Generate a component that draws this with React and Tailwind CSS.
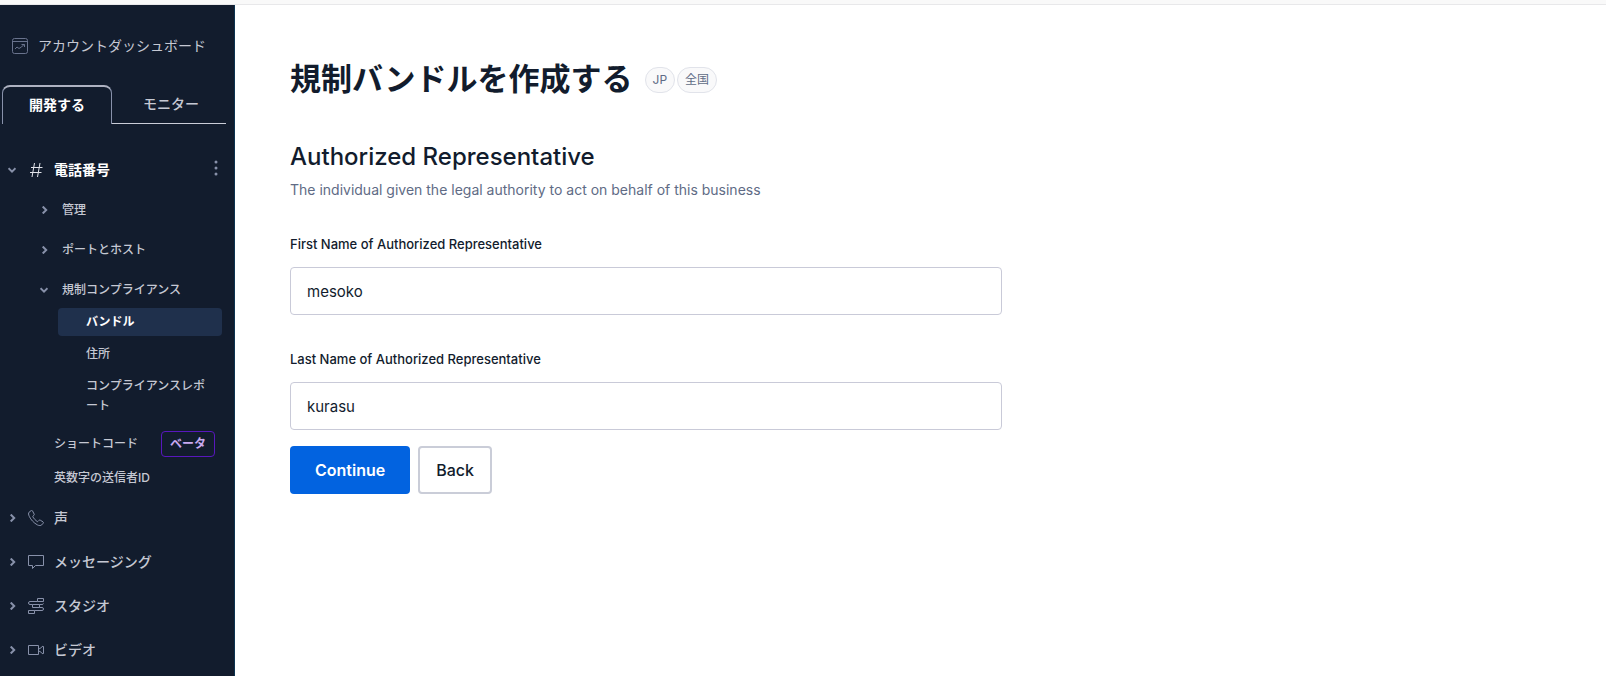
import { useState } from 'react';

const Chevron = ({ open }) => (
  <svg width="8" height="8" viewBox="0 0 8 8" fill="none" stroke="#8891aa" strokeWidth="2" className="shrink-0">
    <path d={open ? 'M0.5 2.2 4 5.7 7.5 2.2' : 'M2.7 0.5 6.2 4 2.7 7.5'} />
  </svg>
);

const Icon = ({ children, className = 'text-[#8891aa]' }) => (
  <svg
    width="16"
    height="16"
    viewBox="0 0 16 16"
    fill="none"
    stroke="currentColor"
    className={`shrink-0 ${className}`}
  >
    {children}
  </svg>
);

const products = [
  {
    label: '声',
    icon: (
      <path d="M3.2.6 1.1 2.2C.2 3 .5 4.8 1.3 6.4c1.6 3.4 4.6 6.6 8.100 8.500 1.800.900 3.400.900 4.300 0l1.500-1.700c.400-.500.300-1-.200-1.300l-2.700-1.700c-.500-.300-1-.200-1.400.200l-.900 1c-.300.300-.600.300-1 0C7.500 10.400 6 8.700 4.900 7c-.200-.400-.200-.700.100-.900l.900-.800c.400-.400.500-.800.200-1.300L4.500.900C4.200.400 3.700.200 3.200.600Z" />
    ),
  },
  {
    label: 'メッセージング',
    icon: <path d="M.5 1.5h15v10h-8l-3 3v-3h-4z" />,
  },
  {
    label: 'スタジオ',
    icon: (
      <>
        <path d="M9.5.5h6v3h-6zM4.5 6.500h7v3h-7zM.5 12.500h6v3h-6z" />
        <path d="M9.500 3.500H2a1.500 1.500 0 0 0 0 3h2.500M11.500 6.500H14a1.500 1.500 0 0 0 1.500-1M11.500 9.500H14a1.500 1.500 0 0 1 0 3H6.500" />
      </>
    ),
  },
  {
    label: 'ビデオ',
    icon: <path d="M.5 3.500h10v9H.500zM10.500 7l1.500-.500 3-2.500.500.500v7l-.500.500-3-2.500-1.500-.500" />,
  },
];

function SubGroup({ label, open }) {
  return (
    <button className="flex h-8 items-center gap-3.5 pl-10 text-left text-xs font-medium">
      <Chevron open={open} />
      {label}
    </button>
  );
}

function Sidebar() {
  return (
    <aside className="flex w-[235px] shrink-0 flex-col border-r border-[#0c3350] bg-[#121c2d] text-[#c5c8d3]">
      <a href="#dashboard" className="mt-[29px] flex h-6 items-center gap-2.5 pl-3 text-sm">
        <Icon className="text-[#69738d]">
          <rect x=".5" y=".5" width="15" height="15" rx="2" />
          <path d="M.5 3.500h15M3 11l2-2 2 1.500 2.500-1.500L12 6.500M9.500 6.500H12.500V9" />
        </Icon>
        アカウントダッシュボード
      </a>

      <div role="tablist" className="mt-[27px] mr-2 ml-0.5 flex text-sm">
        <button
          role="tab"
          aria-selected="true"
          className="h-[39px] w-[110px] rounded-t-lg border-x border-t-2 border-x-[#8891aa] border-t-[#aeb2c1] pb-0.5 font-bold text-white"
        >
          開発する
        </button>
        <button role="tab" aria-selected="false" className="h-[39px] flex-1 border-b border-[#cacdd8] pl-1 font-medium">
          モニター
        </button>
      </div>

      <nav className="mt-6 flex flex-col">
        <div className="flex h-11 items-center justify-between pr-[13px] text-white">
          <button className="flex items-center gap-2.5 pl-2 text-sm font-bold">
            <Chevron open />
            <span className="flex items-center gap-2.5 pl-0.5">
              <Icon className="text-[#e1e3ea]">
                <path d="M6.500 1 4 15M12 1 9.500 15M3 5.500h11.500M2 10.500h11.500" />
              </Icon>
              電話番号
            </span>
          </button>
          <button aria-label="メニュー" className="pb-1">
            <svg width="10" height="16" viewBox="0 0 10 16" fill="#8891aa">
              <circle cx="5" cy="2" r="1.500" />
              <circle cx="5" cy="8" r="1.500" />
              <circle cx="5" cy="14" r="1.500" />
            </svg>
          </button>
        </div>

        <div className="mt-0.5 flex flex-col gap-2">
          <SubGroup label="管理" />
          <SubGroup label="ポートとホスト" />
          <SubGroup label="規制コンプライアンス" open />
        </div>
        <div className="mt-0.5 mr-3 ml-[58px] flex flex-col gap-1 text-xs leading-5 font-medium">
          <a href="#bundles" className="rounded bg-[#1f304c] py-1 pr-4 pl-7 font-bold text-white">
            バンドル
          </a>
          <a href="#addresses" className="py-1 pr-4 pl-7">
            住所
          </a>
          <a href="#report" className="py-1 pr-4 pl-7 break-all">
            コンプライアンスレポート
          </a>
        </div>
        <div className="mt-2 flex flex-col gap-0.5 pr-[19px] pl-[54px] text-xs font-medium">
          <a href="#shortcodes" className="flex h-8 items-center justify-between">
            ショートコード
            <span className="rounded border border-[#5817bd] px-2 py-1 leading-4 font-bold text-[#c9a9f0]">ベータ</span>
          </a>
          <a href="#sender" className="flex h-8 items-center">
            英数字の送信者ID
          </a>
        </div>

        <div className="mt-0.5 flex flex-col">
          {products.map(({ label, icon }) => (
            <button key={label} className="flex h-11 items-center gap-3 pl-2 text-left text-sm font-medium">
              <Chevron />
              <span className="flex items-center gap-2.5">
                <Icon>{icon}</Icon>
                {label}
              </span>
            </button>
          ))}
        </div>
      </nav>
    </aside>
  );
}

function Field({ id, label, value, onChange }) {
  return (
    <div className="flex flex-col">
      <label htmlFor={id} className="text-[13px] leading-5 font-medium">
        {label}
      </label>
      <input
        id={id}
        type="text"
        value={value}
        onChange={(e) => onChange(e.target.value)}
        className="mt-[13px] h-12 rounded border border-[#c9cad8] bg-white px-4 text-[15px]"
      />
    </div>
  );
}

const Tag = ({ children }) => (
  <span className="rounded-full border border-[#e1e3ea] bg-[#f9f9fa] px-[7px] py-1 text-xs leading-4 text-[#606b85]">
    {children}
  </span>
);

export default function App() {
  const [firstName, setFirstName] = useState('mesoko');
  const [lastName, setLastName] = useState('kurasu');

  return (
    <div className="flex h-screen flex-col overflow-hidden bg-white font-['Inter','Noto_Sans_CJK_JP',sans-serif] text-[#121c2d]">
      <div className="h-[5px] shrink-0 border-b border-[#e8e8ea] bg-[#f9f9f9]" />
      <div className="flex min-h-0 flex-1">
        <Sidebar />
        <main className="min-w-0 flex-1 px-[55px] pt-[51px]">
          <div className="flex items-center gap-3">
            <h1 className="pb-0.5 text-[31px] leading-[46px] font-bold">規制バンドルを作成する</h1>
            <div className="flex gap-0.5">
              <Tag>JP</Tag>
              <Tag>全国</Tag>
            </div>
          </div>

          <h2 className="mt-[37px] text-2xl leading-8 font-medium">Authorized Representative</h2>
          <p className="mt-[7px] text-sm leading-5 text-[#606b85]">
            The individual given the legal authority to act on behalf of this business
          </p>

          <form className="mt-[34px] max-w-[712px]" onSubmit={(e) => e.preventDefault()}>
            <div className="flex flex-col gap-[34px]">
              <Field
                id="first-name"
                label="First Name of Authorized Representative"
                value={firstName}
                onChange={setFirstName}
              />
              <Field
                id="last-name"
                label="Last Name of Authorized Representative"
                value={lastName}
                onChange={setLastName}
              />
            </div>
            <div className="mt-4 flex gap-2">
              <button type="submit" className="h-12 rounded bg-[#0263e0] px-[25px] font-semibold text-white">
                Continue
              </button>
              <button type="button" className="h-12 rounded border-2 border-[#cacdd8] px-4 font-medium">
                Back
              </button>
            </div>
          </form>
        </main>
      </div>
    </div>
  );
}
